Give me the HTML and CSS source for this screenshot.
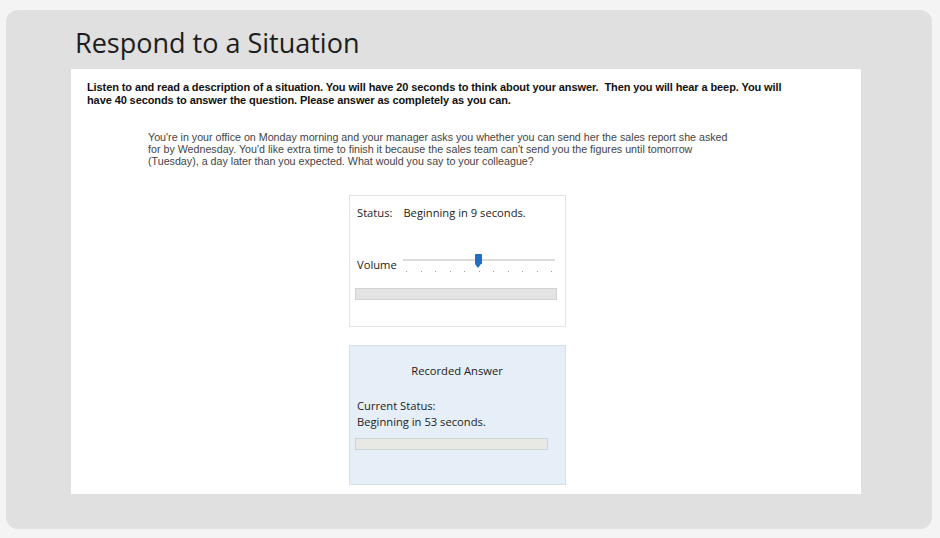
FILE: index.html
```html
<!DOCTYPE html>
<html lang="en">
<head>
    <meta charset="UTF-8">
    <meta name="viewport" content="width=device-width, initial-scale=1.0">
    <title>Respond to a Situation</title>
    <link rel="stylesheet" href="styles.css">
</head>
<body>
    <div class="panel">
        <h1>Respond to a Situation</h1>

        <div class="task">
            <p class="directions">Listen to and read a description of a situation. You will have 20 seconds to think about your answer.&nbsp; Then you will hear a beep. You will have 40 seconds to answer the question. Please answer as completely as you can.</p>

            <p class="situation">You're in your office on Monday morning and your manager asks you whether you can send her the sales report she asked for by Wednesday. You'd like extra time to finish it because the sales team can't send you the figures until tomorrow (Tuesday), a day later than you expected. What would you say to your colleague?</p>

            <!-- Prompt player -->
            <div class="player">
                <div class="status-line">
                    <span class="label">Status:</span>
                    <span>Beginning in 9 seconds.</span>
                </div>
                <div class="volume">
                    <span class="label">Volume</span>
                    <div class="slider">
                        <div class="track"></div>
                        <div class="thumb"></div>
                        <div class="ticks">
                            <i></i><i></i><i></i><i></i><i></i><i></i><i></i><i></i><i></i><i></i><i></i>
                        </div>
                    </div>
                </div>
                <div class="progress"></div>
            </div>

            <!-- Recorder -->
            <div class="recorder">
                <div class="rec-title">Recorded Answer</div>
                <div class="rec-status">Current Status:<br>Beginning in 53 seconds.</div>
                <div class="progress rec-progress"></div>
            </div>
        </div>
    </div>
</body>
</html>
```

FILE: styles.css
```css
body {
    margin: 0;
    padding: 10px 8px 9px 6px;
    background-color: #f4f4f4;
    font-family: "Liberation Sans", Arial, sans-serif;
}

.panel {
    background-color: #dfe0df;
    border-radius: 12px;
    padding: 17px 71px 35px 65px;
}

h1 {
    font-family: "Open Sans", sans-serif;
    font-weight: 400;
    font-size: 27px;
    line-height: 32px;
    color: #1d1d1d;
    margin: 0 0 10px 4px;
}

.task {
    background: #fff;
    height: 425px;
    padding: 12px 16px 0;
    box-sizing: border-box;
}

.directions {
    margin: 0;
    font-size: 11px;
    letter-spacing: -0.1px;
    line-height: 13px;
    font-weight: 700;
    color: #111;
    max-width: 702px;
}

.situation {
    margin: 24px 0 0 61px;
    font-size: 10.7px;
    line-height: 12px;
    color: #444;
    max-width: 588px;
}

.player,
.recorder {
    width: 217px;
    box-sizing: border-box;
    margin-left: 262px;
    font-family: "Open Sans", sans-serif;
    font-size: 11.2px;
    line-height: 15px;
    color: #222;
}

.player {
    margin-top: 28px;
    height: 132px;
    border: 1px solid #e3e3e3;
    padding: 9px 8px 0 7px;
}

.status-line .label {
    margin-right: 8px;
}

.volume {
    display: flex;
    align-items: flex-start;
    margin-top: 34px;
}

.volume .label {
    width: 46px;
    padding-top: 3px;
}

.slider {
    position: relative;
    width: 152px;
    height: 20px;
}

.track {
    margin-top: 5px;
    height: 2px;
    background: #dcdcdc;
}

/* blue pointer handle */
.thumb {
    position: absolute;
    left: 72px;
    top: 0;
    width: 7px;
    height: 10px;
    background: #1f6fc5;
    border-radius: 1px 1px 0 0;
}

.thumb::after {
    content: "";
    position: absolute;
    left: 0;
    top: 10px;
    border-left: 3.5px solid transparent;
    border-right: 3.5px solid transparent;
    border-top: 4px solid #1f6fc5;
}

.ticks {
    display: flex;
    justify-content: space-between;
    padding: 0 3px;
    margin-top: 10px;
}

.ticks i {
    width: 1px;
    height: 1px;
    background: #999;
}

.progress {
    margin-top: 14px;
    height: 12px;
    background: #e4e4e4;
    border: 1px solid #d3d3d3;
    box-sizing: border-box;
    width: 202px;
    margin-left: -2px;
}

.recorder {
    margin-top: 18px;
    height: 140px;
    background: #e6eef8;
    border: 1px solid #d6dfea;
    padding: 17px 8px 0 7px;
}

.rec-title {
    text-align: center;
}

.rec-status {
    margin-top: 20px;
    line-height: 16px;
}

.rec-progress {
    margin-top: 8px;
    width: 193px;
    background: #e8e8e4;
    border-color: #cfd4d8;
}
```
